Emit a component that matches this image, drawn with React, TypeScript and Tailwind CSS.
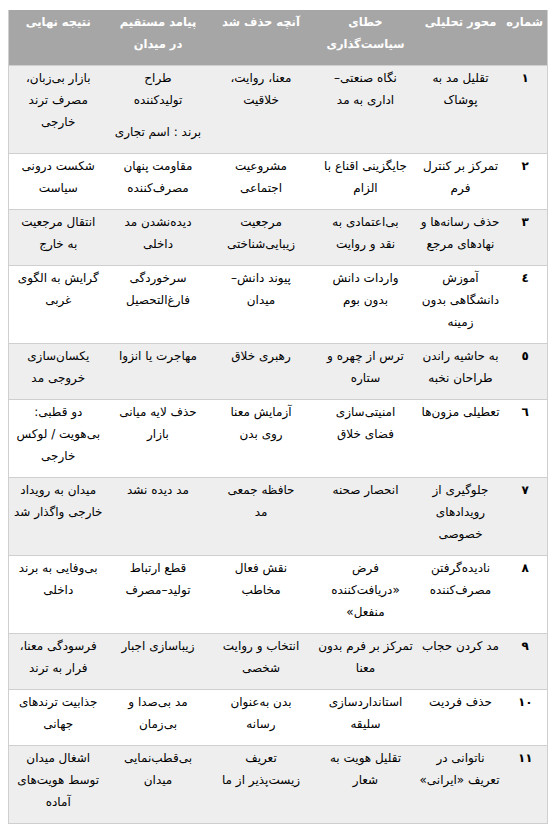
import type { FC } from "react";

type Row = {
  num: string;
  cells: string[][][]; // cell -> paragraphs -> lines
};

const header: string[][] = [
  ["شماره"],
  ["محور تحلیلی"],
  ["خطای", "سیاست‌گذاری"],
  ["آنچه حذف شد"],
  ["پیامد مستقیم", "در میدان"],
  ["نتیجه نهایی"],
];

const rows: Row[] = [
  {
    num: "١",
    cells: [
      [["تقلیل مد به", "پوشاک"]],
      [["نگاه صنعتی–", "اداری به مد"]],
      [["معنا، روایت،", "خلاقیت"]],
      [["طراح", "تولیدکننده"], ["برند : اسم تجاری"]],
      [["بازار بی‌زبان،", "مصرف ترند", "خارجی"]],
    ],
  },
  {
    num: "٢",
    cells: [
      [["تمرکز بر کنترل", "فرم"]],
      [["جایگزینی اقناع با", "الزام"]],
      [["مشروعیت", "اجتماعی"]],
      [["مقاومت پنهان", "مصرف‌کننده"]],
      [["شکست درونی", "سیاست"]],
    ],
  },
  {
    num: "٣",
    cells: [
      [["حذف رسانه‌ها و", "نهادهای مرجع"]],
      [["بی‌اعتمادی به", "نقد و روایت"]],
      [["مرجعیت", "زیبایی‌شناختی"]],
      [["دیده‌نشدن مد", "داخلی"]],
      [["انتقال مرجعیت", "به خارج"]],
    ],
  },
  {
    num: "٤",
    cells: [
      [["آموزش", "دانشگاهی بدون", "زمینه"]],
      [["واردات دانش", "بدون بوم"]],
      [["پیوند دانش–", "میدان"]],
      [["سرخوردگی", "فارغ‌التحصیل"]],
      [["گرایش به الگوی", "غربی"]],
    ],
  },
  {
    num: "٥",
    cells: [
      [["به حاشیه راندن", "طراحان نخبه"]],
      [["ترس از چهره و", "ستاره"]],
      [["رهبری خلاق"]],
      [["مهاجرت یا انزوا"]],
      [["یکسان‌سازی", "خروجی مد"]],
    ],
  },
  {
    num: "٦",
    cells: [
      [["تعطیلی مزون‌ها"]],
      [["امنیتی‌سازی", "فضای خلاق"]],
      [["آزمایش معنا", "روی بدن"]],
      [["حذف لایه میانی", "بازار"]],
      [["دو قطبی:", "بی‌هویت / لوکس", "خارجی"]],
    ],
  },
  {
    num: "٧",
    cells: [
      [["جلوگیری از", "رویدادهای", "خصوصی"]],
      [["انحصار صحنه"]],
      [["حافظه جمعی", "مد"]],
      [["مد دیده نشد"]],
      [["میدان به رویداد", "خارجی واگذار شد"]],
    ],
  },
  {
    num: "٨",
    cells: [
      [["نادیده‌گرفتن", "مصرف‌کننده"]],
      [["فرض", "«دریافت‌کننده", "منفعل»"]],
      [["نقش فعال", "مخاطب"]],
      [["قطع ارتباط", "تولید–مصرف"]],
      [["بی‌وفایی به برند", "داخلی"]],
    ],
  },
  {
    num: "٩",
    cells: [
      [["مد کردن حجاب"]],
      [["تمرکز بر فرم بدون", "معنا"]],
      [["انتخاب و روایت", "شخصی"]],
      [["زیباسازی اجبار"]],
      [["فرسودگی معنا،", "فرار به ترند"]],
    ],
  },
  {
    num: "١٠",
    cells: [
      [["حذف فردیت"]],
      [["استانداردسازی", "سلیقه"]],
      [["بدن به‌عنوان", "رسانه"]],
      [["مد بی‌صدا و", "بی‌زمان"]],
      [["جذابیت ترندهای", "جهانی"]],
    ],
  },
  {
    num: "١١",
    cells: [
      [["ناتوانی در", "تعریف «ایرانی»"]],
      [["تقلیل هویت به", "شعار"]],
      [["تعریف", "زیست‌پذیر از ما"]],
      [["بی‌قطب‌نمایی", "میدان"]],
      [["اشغال میدان", "توسط هویت‌های", "آماده"]],
    ],
  },
];

const Lines: FC<{ lines: string[] }> = ({ lines }) => (
  <p className="mb-[10px] whitespace-nowrap">
    {lines.map((l, i) => (
      <span key={i} className="block">
        {l}
      </span>
    ))}
  </p>
);

const App: FC = () => {
  return (
    <div className="bg-white min-h-[833px] pt-[10px] px-[8px]">
      <table
        dir="rtl"
        className="w-[539px] table-fixed border-collapse text-[12px] leading-[22px] text-black border-x border-b border-[#cfcfcf]"
        style={{ fontFamily: '"DejaVu Sans", sans-serif' }}
      >
        <colgroup>
          <col className="w-[44px]" />
          <col className="w-[86px]" />
          <col className="w-[104px]" />
          <col className="w-[105px]" />
          <col className="w-[101px]" />
          <col className="w-[99px]" />
        </colgroup>
        <thead>
          <tr className="bg-[#a6a6a6] text-white text-[11.5px]">
            {header.map((h, i) => (
              <th key={i} className="px-1 pt-px align-top text-center font-bold">
                <Lines lines={h} />
              </th>
            ))}
          </tr>
        </thead>
        <tbody>
          {rows.map((r, ri) => (
            <tr
              key={r.num}
              className={`border-t border-[#cfcfcf] ${ri % 2 === 0 ? "bg-[#eeeeee]" : "bg-white"}`}
            >
              <td className="px-1 pt-px align-top text-center font-bold">
                <Lines lines={[r.num]} />
              </td>
              {r.cells.map((c, ci) => (
                <td key={ci} className="px-1 pt-px align-top text-center">
                  {c.map((p, pi) => (
                    <Lines key={pi} lines={p} />
                  ))}
                </td>
              ))}
            </tr>
          ))}
        </tbody>
      </table>
    </div>
  );
};

export default App;
